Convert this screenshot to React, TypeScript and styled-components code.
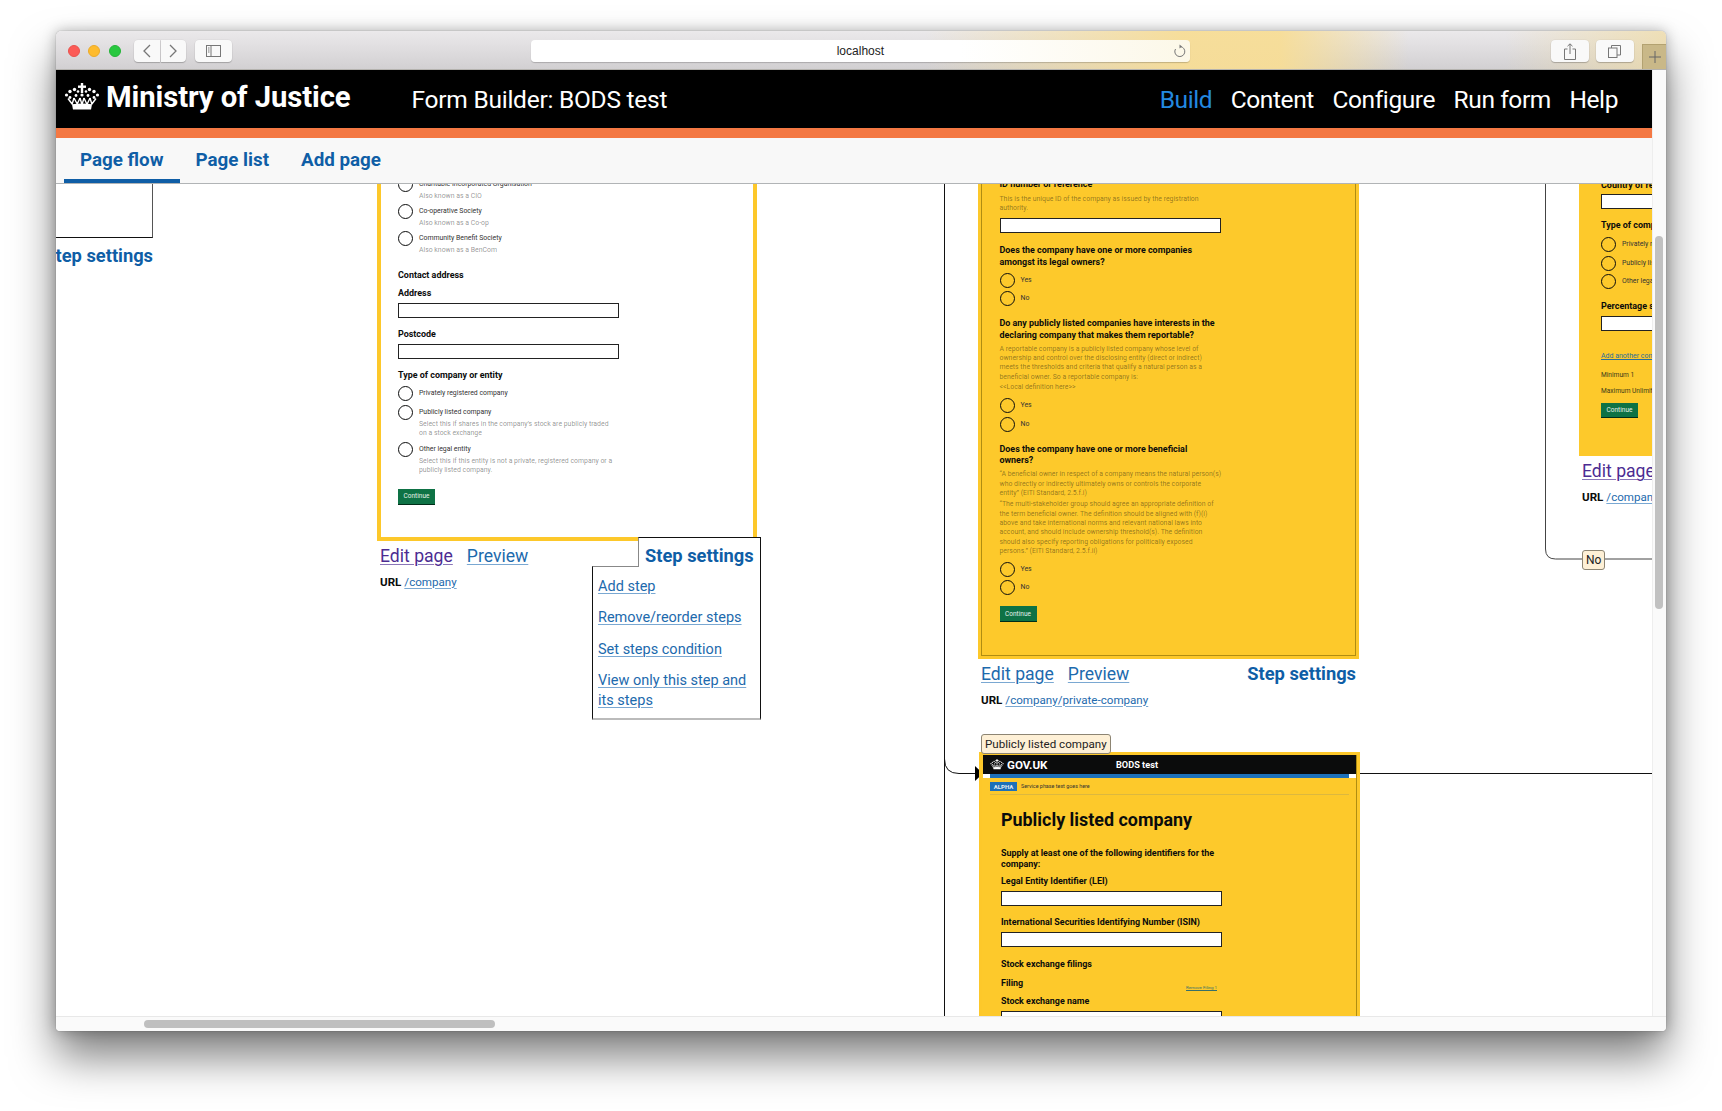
import React from "react";
import styled, { createGlobalStyle } from "styled-components";

const Global = createGlobalStyle`
  html, body { margin: 0; padding: 0; background: #fff; }
  body { font-family: Roboto, "Liberation Sans", sans-serif; color: #0b0c0c; overflow: hidden; }
`;
const Page = styled.div`
  width: 1722px; height: 1111px; padding: 31px 0 0 56px; box-sizing: border-box; overflow: hidden; background: #fff;
`;
const Win = styled.div`
  width: 1610px; height: 1000px; display: flex; flex-direction: column; background: #fff;
  border-radius: 5px 5px 4px 4px; overflow: visible;
  box-shadow: 0 26px 44px rgba(0,0,0,.5), 0 0 14px rgba(0,0,0,.28), 0 0 1px rgba(0,0,0,.5);
`;
const TitleBar = styled.div`
  position: relative; height: 39px; flex: none; box-sizing: border-box; display: flex; align-items: flex-start;
  padding: 9px 0 0 12px; border-radius: 5px 5px 0 0; border-bottom: 1px solid #b4b2ae;
  background:
    linear-gradient(90deg, rgba(247,221,150,0) 54%, rgba(247,221,150,.95) 70%, rgba(247,221,150,.95) 76%, rgba(247,221,150,0) 84%, rgba(240,220,165,0) 90%, rgba(240,220,165,.75) 100%),
    linear-gradient(180deg, #ebe9eb, #d2d0d2);
`;
const Light = styled.span<{ $c: string; $b: string }>`
  width: 12px; height: 12px; box-sizing: border-box; border-radius: 50%; background: ${p => p.$c}; border: 1px solid ${p => p.$b};
  margin: 5px 8.3px 0 0; flex: none;
`;
const ToolBtn = styled.div<{ $w: number; $ml?: number; $r?: string }>`
  width: ${p => p.$w}px; height: 22px; margin-left: ${p => p.$ml ?? 0}px; flex: none; box-sizing: border-box;
  background: #f9f9f9; border-radius: ${p => p.$r ?? "4px"}; box-shadow: 0 1px 1px rgba(0,0,0,.22), 0 0 0 .5px rgba(0,0,0,.05);
  display: flex; align-items: center; justify-content: center; color: #777;
`;
const UrlBar = styled.div`
  position: relative; width: 659px; height: 22px; margin-left: 299px; flex: none; border-radius: 4px;
  background: linear-gradient(90deg, #fff 65%, #fcf8e8); box-shadow: 0 1px 1px rgba(0,0,0,.2);
  display: flex; align-items: center; justify-content: center; font: 12px "Liberation Sans", sans-serif; color: #222;
`;
const Reload = styled.span`
  position: absolute; right: 4px; top: 4px; color: #777; display: flex;
`;
const PlusTab = styled.div`
  position: absolute; right: 0; bottom: 0; width: 24px; height: 25px; box-sizing: border-box; color: #666;
  background: #c9b888; border: 1px solid #b3a271; border-bottom: 0; border-right: 0; display: flex; align-items: center; justify-content: center;
`;
const Body = styled.div`
  flex: 1; min-height: 0; display: flex;
`;
const Main = styled.div`
  width: 1596px; display: flex; flex-direction: column; min-height: 0;
`;
const VScroll = styled.div`
  flex: 1; background: #fafafa; border-left: 1px solid #eee; padding: 166px 0 0 2px; box-sizing: border-box;
`;
const VThumb = styled.div`
  width: 8px; height: 373px; background: #c1c1c1; border-radius: 4px;
`;
const HScroll = styled.div`
  height: 15px; flex: none; box-sizing: border-box; background: #fafafa; border-top: 1px solid #e8e8e8; padding: 3px 0 0 88px; border-radius: 0 0 4px 4px;
`;
const HThumb = styled.div`
  width: 351px; height: 8px; background: #bfbfbf; border-radius: 4px;
`;
const Header = styled.header`
  height: 68px; flex: none; box-sizing: border-box; background: #000; border-bottom: 10px solid #f47843; display: flex; align-items: center;
  padding: 0 34px 0 8px; color: #fff;
`;
const Brand = styled.div`
  display: flex; align-items: center; gap: 6px; font-weight: 700; font-size: 29.3px; letter-spacing: -.1px; margin-top: -5px;
`;
const AppName = styled.div`
  font-size: 24.5px; margin-left: 61px; letter-spacing: -.25px;
`;
const TopNav = styled.nav`
  margin-left: auto; display: flex; gap: 18.5px; font-size: 24.5px; letter-spacing: -.4px;
`;
const TopLink = styled.span<{ $on?: boolean }>`
  color: ${p => (p.$on ? "#2389e0" : "#fff")};
`;
const SubNav = styled.nav`
  height: 46px; flex: none; box-sizing: border-box; background: #f8f8f8; border-bottom: 1px solid #b1b4b6; display: flex; padding-left: 8px;
`;
const SubTab = styled.span<{ $on?: boolean }>`
  padding: 3px 16px 0; height: 45px; box-sizing: border-box; display: flex; align-items: center; font-weight: 700; font-size: 18.8px; color: #0f5ea6;
  border-bottom: 4px solid ${p => (p.$on ? "#0f5ea6" : "transparent")}; 
`;
const Canvas = styled.div`
  position: relative; flex: 1; min-height: 0; overflow: hidden; background: #fff;
`;
const Wires = styled.svg`
  position: absolute; left: 0; top: 0; width: 1596px; height: 832px;
`;
const Node = styled.div<{ $x: number; $y: number; $w: number }>`
  position: absolute; left: ${p => p.$x}px; top: ${p => p.$y}px; width: ${p => p.$w}px;
`;
const StubBox = styled.div`
  height: 154px; box-sizing: border-box; border-right: 1px solid #555; border-bottom: 1px solid #111;
`;
const StubSettings = styled.div`
  text-align: right; font-weight: 700; font-size: 18.3px; line-height: 24px; color: #0f5ea6; margin-top: 6px;
`;
const Frame = styled.div<{ $w: number; $fill: string; $pt: number; $pb: number }>`
  box-sizing: border-box; background: ${p => p.$fill}; border: ${p => p.$w}px solid #fdc82a; padding-top: ${p => p.$pt}px; padding-bottom: ${p => p.$pb}px;
`;
const Lined = styled.div`
  border: 1px solid #b08d12; padding: 24.5px 0 33px 17.5px;
`;
const Col = styled.div<{ $l: number; $w?: number }>`
  margin-left: ${p => p.$l}px; width: ${p => p.$w ?? 221}px;
`;
const Label = styled.div<{ $mt?: number; $mb?: number }>`
  font-weight: 700; font-size: 8.95px; line-height: 11.3px; color: #0b0c0c; margin-top: ${p => p.$mt ?? 0}px; margin-bottom: ${p => p.$mb ?? 0}px; white-space: nowrap;
`;
const Hint = styled.div<{ $mt?: number; $mb?: number }>`
  font-size: 6.9px; line-height: 9.45px; color: rgba(11,12,12,.45); margin-top: ${p => p.$mt ?? 0}px; margin-bottom: ${p => p.$mb ?? 0}px;
`;
const Input = styled.div<{ $mt?: number }>`
  height: 15px; box-sizing: border-box; background: #fff; border: 1px solid #222; margin-top: ${p => p.$mt ?? 3.7}px;
`;
const RadioRow = styled.div<{ $hinted?: boolean }>`
  display: grid; grid-template-columns: 15px 1fr; column-gap: 6px; margin-bottom: ${p => (p.$hinted ? 3 : 3.5)}px;
`;
const Circle = styled.span`
  width: 15px; height: 15px; box-sizing: border-box; border: 1px solid #0b0c0c; border-radius: 50%; display: block;
`;
const RadioText = styled.div`
  font-size: 6.9px; line-height: 15px; color: #333;
`;
const RadioHint = styled(Hint)`
  grid-column: 2;
`;
const Continue = styled.div<{ $mt: number }>`
  width: 37px; height: 15.5px; margin-top: ${p => p.$mt}px; box-sizing: border-box; background: #0e7245; color: #e6f1ea; font-size: 6.5px;
  border-bottom: 1px solid #002d18; display: flex; align-items: center; justify-content: center;
`;
const Footer = styled.div`
  position: relative; padding: 3px 3px 0; 
`;
const FootLinks = styled.div`
  display: flex; gap: 14px; align-items: center; height: 24px; font-size: 17.6px;
`;
const Purple = styled.a`
  color: #4c2c92; text-decoration: underline; text-decoration-thickness: 1px; text-underline-offset: 2px; text-decoration-color: #8a76b8;
`;
const Blue = styled.a`
  color: #1d6aad; text-decoration: underline; text-decoration-thickness: 1px; text-underline-offset: 2px; text-decoration-color: #7aa8d2;
`;
const SettingsLink = styled.span`
  margin-left: auto; font-weight: 700; color: #0f5ea6; font-size: 18.3px;
`;
const UrlLine = styled.div`
  margin-top: 7px; font-size: 11.6px; line-height: 14px; display: flex; gap: 3px;
`;
const UrlKey = styled.b`
  font-weight: 700;
`;
const Popup = styled.div`
  position: absolute; right: -4px; top: -4px; width: 169px; display: flex; flex-direction: column; align-items: flex-end;
`;
const PopTab = styled.div`
  position: relative; z-index: 1; width: 123px; height: 30px; box-sizing: border-box; background: #fff; border: 1px solid #111; border-left-color: #888; border-bottom: 0;
  padding: 6px 0 0 6px; font-weight: 700; font-size: 18.3px; line-height: 24px; color: #0f5ea6; margin-bottom: -1px;
`;
const PopMenu = styled.div`
  width: 169px; height: 154px; box-sizing: border-box; background: #fff; border: 1px solid #111; border-top-color: #888; border-bottom: 2px solid #bbb;
  padding: 10px 5px 0; font-size: 14.5px; display: flex; flex-direction: column;
`;
const MenuItem = styled(Blue)`
  display: block; line-height: 19.5px; margin-bottom: 12px;
`;
const Tag = styled.div<{ $l: number; $t: number; $fs: number }>`
  position: absolute; left: ${p => p.$l}px; top: ${p => p.$t}px; z-index: 2; box-sizing: border-box; white-space: nowrap; background: #fef0d6; color: #222;
  border: 1px solid #8d8573; border-radius: 3px; font-size: ${p => p.$fs}px; padding: 1px 3px; line-height: 16px;
`;
const GovHead = styled.div`
  height: 19px; background: #0b0c0c; color: #fff; display: flex; align-items: center; padding-left: 7px;
`;
const GovMark = styled.div`
  width: 126px; display: flex; align-items: center; gap: 3px; font-weight: 700; font-size: 11.6px; flex: none;
`;
const GovService = styled.div`
  font-weight: 700; font-size: 9.2px;
`;
const GovBar = styled.div`
  height: 4px; background: #fff;  padding: 0 7px;
`;
const GovBarFill = styled.div`
  height: 4px; background: #1d70b8;
`;
const Phase = styled.div`
  margin: 3.5px 7px 0; height: 13.5px; box-sizing: border-box; border-bottom: 1px solid #dcb83f; display: flex; gap: 4px; align-items: flex-start;
`;
const PhaseTag = styled.span`
  width: 27px; height: 9.5px; background: #1d70b8; color: #e8eef2; font-weight: 700; font-size: 6px; display: flex; align-items: center; justify-content: center;
`;
const PhaseText = styled.span`
  font-size: 5.4px; line-height: 9.5px; color: #333;
`;
const Lined3 = styled.div`
  border-right: 1px solid #b08d12; margin-left: 1px; height: 300px;
`;
const H1 = styled.h1`
  margin: 14px 0 0; font-size: 17.9px; line-height: 22px; font-weight: 700; white-space: nowrap; color: #0b0c0c;
`;
const FilingRow = styled.div`
  display: flex; justify-content: space-between; align-items: flex-end; margin-top: 8.5px;
`;
const RemoveLink = styled.span`
  font-size: 4.4px; color: #37706a; text-decoration: underline; margin-right: 5px;
`;
const AddLink = styled.div`
  margin-top: 20px; font-size: 7px; line-height: 10px; color: #2a6e9a; text-decoration: underline; white-space: nowrap;
`;
const Meta = styled.div<{ $mt: number }>`
  margin-top: ${p => p.$mt}px; font-size: 6.6px; line-height: 10px; color: #3c3a1a; white-space: nowrap;
`;
const Nowrap = styled.div`
  white-space: nowrap;
`;

const Crown = ({ w, h }: { w: number; h: number }) => (
  <svg width={w} height={h} viewBox="0 0 36 27" fill="#fff">
    <rect x="16.8" y="0" width="2.4" height="10" />
    <rect x="14" y="2.5" width="8" height="2.4" />
    <circle cx="2.5" cy="12" r="1.6" /><circle cx="6" cy="8.5" r="1.7" /><circle cx="10.5" cy="6.5" r="1.7" /><circle cx="14" cy="8.5" r="1.3" />
    <circle cx="33.5" cy="12" r="1.6" /><circle cx="30" cy="8.5" r="1.7" /><circle cx="25.5" cy="6.5" r="1.7" /><circle cx="22" cy="8.5" r="1.3" />
    <circle cx="6" cy="14.5" r="1.4" /><circle cx="12" cy="12.5" r="1.4" /><circle cx="18" cy="12" r="1.6" /><circle cx="24" cy="12.5" r="1.4" /><circle cx="30" cy="14.5" r="1.4" />
    <path d="M4 15.5l4.5 6M10 15l-2 6.5M10 15l3.5 6.5M16 15l-3 6.5M16 15l2 6.5M20 15l-2 6.5M20 15l3 6.5M26 15l-3 6.5M26 15l2 6.5M32 15.5l-4.5 6" stroke="#fff" strokeWidth="1.4" fill="none" />
    <path d="M8 21.2Q18 19.6 28 21.2L27 26.5H9z" />
  </svg>
);

const RadioItem = ({ label, hint }: { label: string; hint?: string[] }) => (
  <RadioRow $hinted={!!hint}>
    <Circle />
    <RadioText>{label}</RadioText>
    {hint && <RadioHint>{hint.map(h => <Nowrap key={h}>{h}</Nowrap>)}</RadioHint>}
  </RadioRow>
);
const Lines = ({ items }: { items: string[] }) => <>{items.map(t => <Nowrap key={t}>{t}</Nowrap>)}</>;

const Legal = () => (
  <>
    <RadioItem label="Charitable Incorporated Organisation" hint={["Also known as a CIO"]} />
    <RadioItem label="Co-operative Society" hint={["Also known as a Co-op"]} />
    <RadioItem label="Community Benefit Society" hint={["Also known as a BenCom"]} />
    <Label $mt={14.5} $mb={6}>Contact address</Label>
    <Label>Address</Label>
    <Input />
    <Label $mt={11}>Postcode</Label>
    <Input />
    <Label $mt={11} $mb={5.5}>Type of company or entity</Label>
    <RadioItem label="Privately registered company" />
    <RadioItem label="Publicly listed company" hint={["Select this if shares in the company’s stock are publicly traded", "on a stock exchange"]} />
    <RadioItem label="Other legal entity" hint={["Select this if this entity is not a private, registered company or a", "publicly listed company."]} />
    <Continue $mt={13.5}>Continue</Continue>
  </>
);

const Private = () => (
  <>
    <Label>ID number or reference</Label>
    <Hint $mt={5} $mb={4.5}><Lines items={["This is the unique ID of the company as issued by the registration", "authority."]} /></Hint>
    <Input $mt={0} />
    <Label $mt={12} $mb={5}><Lines items={["Does the company have one or more companies", "amongst its legal owners?"]} /></Label>
    <RadioItem label="Yes" /><RadioItem label="No" />
    <Label $mt={12}><Lines items={["Do any publicly listed companies have interests in the", "declaring company that makes them reportable?"]} /></Label>
    <Hint $mt={3.7}><Lines items={["A reportable company is a publicly listed company whose level of", "ownership and control over the disclosing entity (direct or indirect)", "meets the thresholds and criteria that qualify a natural person as a", "beneficial owner. So a reportable company is:"]} /></Hint>
    <Hint $mt={1} $mb={5.6}>{"<<Local definition here>>"}</Hint>
    <RadioItem label="Yes" /><RadioItem label="No" />
    <Label $mt={12}><Lines items={["Does the company have one or more beneficial", "owners?"]} /></Label>
    <Hint $mt={3.7}><Lines items={["“A beneficial owner in respect of a company means the natural person(s)", "who directly or indirectly ultimately owns or controls the corporate", "entity” (EITI Standard, 2.5.f.i)"]} /></Hint>
    <Hint $mt={1.5} $mb={5}><Lines items={["“The multi-stakeholder group should agree an appropriate definition of", "the term beneficial owner. The definition should be aligned with (f)(i)", "above and take international norms and relevant national laws into", "account, and should include ownership threshold(s). The definition", "should also specify reporting obligations for politically exposed", "persons.” (EITI Standard, 2.5.f.ii)"]} /></Hint>
    <RadioItem label="Yes" /><RadioItem label="No" />
    <Continue $mt={11}>Continue</Continue>
  </>
);

const Listed = () => (
  <Lined3>
    <GovHead>
      <GovMark><Crown w={14} h={10.5} />GOV.UK</GovMark>
      <GovService>BODS test</GovService>
    </GovHead>
    <GovBar><GovBarFill /></GovBar>
    <Phase><PhaseTag>ALPHA</PhaseTag><PhaseText>Service phase text goes here</PhaseText></Phase>
    <Col $l={18}>
      <H1>Publicly listed company</H1>
      <Label $mt={17}><Lines items={["Supply at least one of the following identifiers for the", "company:"]} /></Label>
      <Label $mt={5}>Legal Entity Identifier (LEI)</Label>
      <Input />
      <Label $mt={11}>International Securities Identifying Number (ISIN)</Label>
      <Input />
      <Label $mt={12}>Stock exchange filings</Label>
      <FilingRow><Label>Filing</Label><RemoveLink>Remove Filing 1</RemoveLink></FilingRow>
      <Label $mt={6}>Stock exchange name</Label>
      <Input />
    </Col>
  </Lined3>
);

const Owner = () => (
  <>
    <Label>Country of registration</Label>
    <Input />
    <Label $mt={11} $mb={5.5}>Type of company or entity</Label>
    <RadioItem label="Privately registered company" />
    <RadioItem label="Publicly listed company" />
    <RadioItem label="Other legal entity" />
    <Label $mt={11.5}>Percentage share</Label>
    <Input />
    <AddLink>Add another company</AddLink>
    <Meta $mt={9}>Minimum 1</Meta>
    <Meta $mt={6.6}>Maximum Unlimited</Meta>
    <Continue $mt={6.4}>Continue</Continue>
  </>
);

export default function App() {
  return (
    <Page>
      <Global />
      <Win>
        <TitleBar>
          <Light $c="#fc5b57" $b="#e9524d" />
          <Light $c="#febb2e" $b="#ecaa28" />
          <Light $c="#28c83f" $b="#24b438" />
          <ToolBtn $w={26} $ml={5} $r="4px 0 0 4px">
            <svg width="10" height="14" viewBox="0 0 10 14" fill="none" stroke="currentColor" strokeWidth="1.3"><path d="M8 1L2 7l6 6" /></svg>
          </ToolBtn>
          <ToolBtn $w={25} $ml={1} $r="0 4px 4px 0">
            <svg width="10" height="14" viewBox="0 0 10 14" fill="none" stroke="currentColor" strokeWidth="1.3"><path d="M2 1l6 6-6 6" /></svg>
          </ToolBtn>
          <ToolBtn $w={37} $ml={9}>
            <svg width="15" height="12" viewBox="0 0 15 12" fill="none" stroke="currentColor"><rect x=".5" y=".5" width="14" height="11" /><path d="M5 .5v11M2 3h1.5M2 5h1.5M2 7h1.5" /></svg>
          </ToolBtn>
          <UrlBar>
            localhost
            <Reload>
              <svg width="13" height="14" viewBox="0 0 13 14" fill="none" stroke="currentColor"><path d="M7.5 2.6A5 5 0 1 1 2.5 5" /><path d="M6.5 .5l2.5 2-2.5 2z" fill="currentColor" stroke="none" /></svg>
            </Reload>
          </UrlBar>
          <ToolBtn $w={38} $ml={361}>
            <svg width="12" height="17" viewBox="0 0 12 17" fill="none" stroke="currentColor"><path d="M3.5 6H.5v10.5h11V6h-3M6 11V1M3.5 3.2L6 .8l2.5 2.4" /></svg>
          </ToolBtn>
          <ToolBtn $w={38} $ml={7}>
            <svg width="13" height="13" viewBox="0 0 13 13" fill="none" stroke="currentColor"><rect x=".5" y="3" width="8.5" height="9.5" /><path d="M3.5 3V.5h9V10H9" /></svg>
          </ToolBtn>
          <PlusTab>
            <svg width="12" height="12" viewBox="0 0 12 12" stroke="currentColor"><path d="M6 0v12M0 6h12" /></svg>
          </PlusTab>
        </TitleBar>
        <Body>
          <Main>
            <Header>
              <Brand><Crown w={36} h={27} />Ministry of Justice</Brand>
              <AppName>Form Builder: BODS test</AppName>
              <TopNav>
                <TopLink $on>Build</TopLink>
                <TopLink>Content</TopLink>
                <TopLink>Configure</TopLink>
                <TopLink>Run form</TopLink>
                <TopLink>Help</TopLink>
              </TopNav>
            </Header>
            <SubNav>
              <SubTab $on>Page flow</SubTab>
              <SubTab>Page list</SubTab>
              <SubTab>Add page</SubTab>
            </SubNav>
            <Canvas>
              <Wires viewBox="0 0 1596 832" fill="none">
                <path d="M888.5 0V832M888.5 575q0 14.5 14.5 14.5H920" stroke="#111" />
                <path d="M919 582l8 7.5-8 7.5z" fill="#000" />
                <path d="M1304 589.5H1596" stroke="#111" />
                <path d="M1489.5 0V365q0 10 10 10H1596" stroke="#444" />
              </Wires>

              <Node $x={-300} $y={-100} $w={397}>
                <StubBox />
                <StubSettings>Step settings</StubSettings>
              </Node>

              <Node $x={321} $y={-44} $w={380}>
                <Frame $w={4} $fill="#fff" $pt={32.5} $pb={32}>
                  <Col $l={17}><Legal /></Col>
                </Frame>
                <Footer>
                  <FootLinks><Purple>Edit page</Purple><Blue>Preview</Blue></FootLinks>
                  <UrlLine><UrlKey>URL</UrlKey><Blue>/company</Blue></UrlLine>
                  <Popup>
                    <PopTab>Step settings</PopTab>
                    <PopMenu>
                      <MenuItem>Add step</MenuItem>
                      <MenuItem>Remove/reorder steps</MenuItem>
                      <MenuItem>Set steps condition</MenuItem>
                      <MenuItem>View only this step and its steps</MenuItem>
                    </PopMenu>
                  </Popup>
                </Footer>
              </Node>

              <Node $x={922} $y={-34} $w={381}>
                <Frame $w={3.5} $fill="#fdc92b" $pt={0} $pb={0}>
                  <Lined><Col $l={0}><Private /></Col></Lined>
                </Frame>
                <Footer>
                  <FootLinks><Blue>Edit page</Blue><Blue>Preview</Blue><SettingsLink>Step settings</SettingsLink></FootLinks>
                  <UrlLine><UrlKey>URL</UrlKey><Blue>/company/private-company</Blue></UrlLine>
                </Footer>
              </Node>

              <Node $x={923} $y={568} $w={381}>
                <Tag $l={2} $t={-18} $fs={11.6}>Publicly listed company</Tag>
                <Frame $w={3} $fill="#fdc92b" $pt={0} $pb={0}><Listed /></Frame>
              </Node>

              <Node $x={1523} $y={-34} $w={320}>
                <Frame $w={0} $fill="#fdc92b" $pt={29.5} $pb={38}>
                  <Col $l={22}><Owner /></Col>
                </Frame>
                <Footer>
                  <FootLinks><Purple>Edit page</Purple></FootLinks>
                  <UrlLine><UrlKey>URL</UrlKey><Blue>/company/legal-owner</Blue></UrlLine>
                </Footer>
              </Node>

              <Tag $l={1526} $t={366} $fs={12}>No</Tag>
            </Canvas>
          </Main>
          <VScroll><VThumb /></VScroll>
        </Body>
        <HScroll><HThumb /></HScroll>
      </Win>
    </Page>
  );
}
